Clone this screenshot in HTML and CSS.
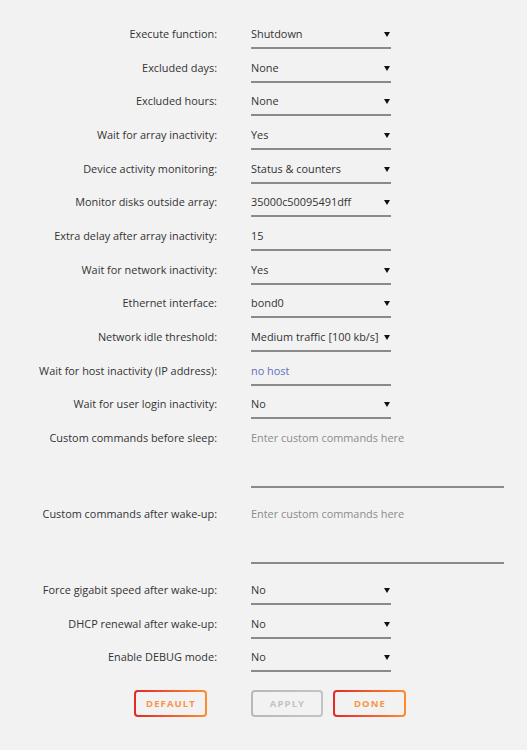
FILE: index.html
```html
<!DOCTYPE html>
<html lang="en">

<head>
    <meta charset="utf-8">
    <meta name="viewport" content="width=device-width, initial-scale=1">
    <link rel="stylesheet" href="styles.css">
</head>

<body>
    <form id="sleep-settings">
        <div class="row">
            <label class="label">Execute function:</label>
            <div class="field select"><select><option>Shutdown</option></select></div>
        </div>
        <div class="row">
            <label class="label">Excluded days:</label>
            <div class="field select"><select><option>None</option></select></div>
        </div>
        <div class="row">
            <label class="label">Excluded hours:</label>
            <div class="field select"><select><option>None</option></select></div>
        </div>
        <div class="row">
            <label class="label">Wait for array inactivity:</label>
            <div class="field select"><select><option>Yes</option></select></div>
        </div>
        <div class="row">
            <label class="label">Device activity monitoring:</label>
            <div class="field select"><select><option>Status &amp; counters</option></select></div>
        </div>
        <div class="row">
            <label class="label">Monitor disks outside array:</label>
            <div class="field select"><select><option>35000c50095491dff</option></select></div>
        </div>
        <div class="row">
            <label class="label">Extra delay after array inactivity:</label>
            <div class="field"><input type="text" value="15"></div>
        </div>
        <div class="row">
            <label class="label">Wait for network inactivity:</label>
            <div class="field select"><select><option>Yes</option></select></div>
        </div>
        <div class="row">
            <label class="label">Ethernet interface:</label>
            <div class="field select"><select><option>bond0</option></select></div>
        </div>
        <div class="row">
            <label class="label">Network idle threshold:</label>
            <div class="field select"><select><option>Medium traffic [100 kb/s]</option></select></div>
        </div>
        <div class="row">
            <label class="label">Wait for host inactivity (IP address):</label>
            <div class="field"><input type="text" class="hosts" placeholder="no host"></div>
        </div>
        <div class="row">
            <label class="label">Wait for user login inactivity:</label>
            <div class="field select"><select><option>No</option></select></div>
        </div>
        <div class="row tall">
            <label class="label">Custom commands before sleep:</label>
            <div class="field wide"><textarea placeholder="Enter custom commands here"></textarea></div>
        </div>
        <div class="row tall">
            <label class="label">Custom commands after wake-up:</label>
            <div class="field wide"><textarea placeholder="Enter custom commands here"></textarea></div>
        </div>
        <div class="row">
            <label class="label">Force gigabit speed after wake-up:</label>
            <div class="field select"><select><option>No</option></select></div>
        </div>
        <div class="row">
            <label class="label">DHCP renewal after wake-up:</label>
            <div class="field select"><select><option>No</option></select></div>
        </div>
        <div class="row">
            <label class="label">Enable DEBUG mode:</label>
            <div class="field select"><select><option>No</option></select></div>
        </div>

        <div class="row buttons">
            <div class="label">
                <button type="button" class="btn">Default</button>
            </div>
            <div class="field actions">
                <button type="submit" class="btn" disabled>Apply</button>
                <button type="button" class="btn">Done</button>
            </div>
        </div>
    </form>
</body>

</html>
```

FILE: styles.css
```css
html,
body {
    margin: 0;
    padding: 0;
}

body {
    background: #f2f2f2;
    color: #333;
    font-family: "Open Sans", sans-serif;
    font-size: 10.9px;
}

#sleep-settings {
    display: flex;
    flex-direction: column;
    padding-top: 17px;
}

.row {
    display: flex;
    align-items: flex-start;
    height: 33.67px;
}

.row.tall {
    height: 76px;
}

.label {
    width: 217px;
    flex-shrink: 0;
    text-align: right;
    line-height: 34px;
    height: 34px;
    white-space: nowrap;
}

.field {
    margin-left: 34px;
    width: 140px;
    position: relative;
}

.field.wide {
    width: 253px;
}

select,
input,
textarea {
    display: block;
    width: 100%;
    box-sizing: border-box;
    margin: 0;
    padding: 0;
    border: 0;
    border-bottom: 2px solid #8a8a8a;
    border-radius: 0;
    background: transparent;
    color: #333;
    font-family: inherit;
    font-size: inherit;
    outline: none;
    -webkit-appearance: none;
    appearance: none;
}

select,
input {
    height: 29px;
    line-height: 27px;
    margin-top: 3px;
}

select {
    padding-right: 6px;
}

.select::after {
    content: "";
    position: absolute;
    right: 1px;
    top: 15px;
    border-left: 3px solid transparent;
    border-right: 3px solid transparent;
    border-top: 5px solid #111;
}

textarea {
    height: 62px;
    margin-top: 5px;
    padding-top: 4px;
    line-height: 16px;
    resize: none;
}

textarea::placeholder {
    color: #8c8c8c;
}

.hosts::placeholder {
    color: #5d70c0;
}

.buttons {
    margin-top: 16px;
    height: auto;
}

.buttons .label {
    display: flex;
    justify-content: flex-end;
    height: auto;
    line-height: normal;
}

.actions {
    display: flex;
    gap: 10px;
    width: auto;
}

.btn {
    width: 73px;
    height: 27px;
    margin-right: 10px;
    padding: 0 0 0 1px;
    border: 2px solid transparent;
    border-radius: 4px;
    background: linear-gradient(#f2f2f2, #f2f2f2) padding-box,
        linear-gradient(90deg, #e22828, #ff8c2f) border-box;
    color: #fb9347;
    font-family: inherit;
    font-size: 9.5px;
    font-weight: bold;
    letter-spacing: 1.1px;
    text-transform: uppercase;
    cursor: pointer;
}

.actions .btn {
    margin-right: 0;
}

.btn:disabled {
    width: 72px;
    background: linear-gradient(#f2f2f2, #f2f2f2) padding-box,
        linear-gradient(90deg, #b8b8b8, #c4c4c4) border-box;
    color: #c2c2c2;
    cursor: default;
}
```
